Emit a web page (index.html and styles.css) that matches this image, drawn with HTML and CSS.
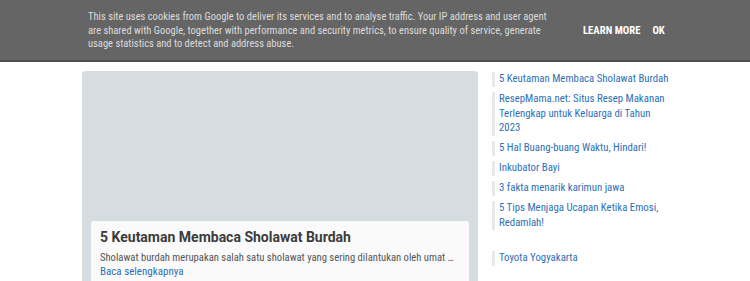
FILE: index.html
```html
<!DOCTYPE html>
<html lang="en">
<head>
    <meta charset="UTF-8">
    <meta name="viewport" content="width=device-width, initial-scale=1.0">
    <title>5 Keutaman Membaca Sholawat Burdah</title>
    <link rel="stylesheet" href="styles.css">
</head>
<body>
    <div class="cookie-bar">
        <p class="cookie-text">This site uses cookies from Google to deliver its services and to analyse traffic. Your IP address and user agent are shared with Google, together with performance and security metrics, to ensure quality of service, generate usage statistics and to detect and address abuse.</p>
        <div class="cookie-actions">
            <a href="#">LEARN MORE</a>
            <a href="#">OK</a>
        </div>
    </div>

    <div class="page">
        <main class="main">
            <article class="featured">
                <div class="featured-box">
                    <h2 class="featured-title">5 Keutaman Membaca Sholawat Burdah</h2>
                    <p class="featured-snippet">Sholawat burdah merupakan salah satu sholawat yang sering dilantukan oleh umat …</p>
                    <a href="#" class="read-more">Baca selengkapnya</a>
                </div>
            </article>
        </main>

        <aside class="sidebar">
            <ul class="link-list">
                <li><a href="#">5 Keutaman Membaca Sholawat Burdah</a></li>
                <li><a href="#">ResepMama.net: Situs Resep Makanan Terlengkap untuk Keluarga di Tahun 2023</a></li>
                <li><a href="#">5 Hal Buang-buang Waktu, Hindari!</a></li>
                <li><a href="#">Inkubator Bayi</a></li>
                <li><a href="#">3 fakta menarik karimun jawa</a></li>
                <li><a href="#">5 Tips Menjaga Ucapan Ketika Emosi, Redamlah!</a></li>
            </ul>
            <ul class="link-list">
                <li><a href="#">Toyota Yogyakarta</a></li>
            </ul>
        </aside>
    </div>
</body>
</html>
```

FILE: styles.css
```css
* {
    margin: 0;
    padding: 0;
    box-sizing: border-box;
}

body {
    font-family: Roboto, "Liberation Sans", sans-serif;
    font-stretch: condensed;
    background-color: #fff;
    overflow: hidden;
}

.cookie-bar {
    position: fixed;
    top: 0;
    left: 0;
    width: 100%;
    height: 62px;
    z-index: 100;
    display: flex;
    align-items: center;
    padding: 1px 88px 0;
    background-color: #656565;
    border-bottom: 2px solid #4e4e4e;
}

.cookie-text {
    width: 462px;
    flex-shrink: 0;
    font-size: 10.5px;
    line-height: 13.7px;
    color: #dcdcdc;
}

.cookie-actions {
    display: flex;
    gap: 12px;
    margin-left: 33px;
    white-space: nowrap;
}

.cookie-actions a {
    color: #fff;
    font-size: 10.7px;
    font-weight: bold;
    text-decoration: none;
}

.page {
    display: flex;
    gap: 14px;
    padding: 71px 0 0 82px;
}

.main {
    width: 396px;
}

.featured {
    height: 230px;
    background-color: #d5dde0;
    border-radius: 3px;
    padding: 150px 9px 0;
}

.featured-box {
    background-color: #fafafa;
    border-radius: 3px;
    padding: 7px 9px;
}

.featured-title {
    font-size: 14px;
    font-stretch: normal;
    font-weight: bold;
    color: #3c3c3c;
    line-height: 18px;
    margin-bottom: 5px;
}

.featured-snippet {
    font-size: 10.6px;
    color: #555;
    line-height: 14px;
    white-space: nowrap;
    overflow: hidden;
    text-overflow: ellipsis;
}

.read-more {
    display: block;
    font-size: 11px;
    line-height: 14px;
    color: #2d70b7;
    text-decoration: none;
}

.sidebar {
    width: 180px;
    padding-top: 1px;
}

.link-list {
    list-style: none;
    display: flex;
    flex-direction: column;
    gap: 5.5px;
    margin-bottom: 21px;
}

.link-list li {
    border-left: 3px solid #e8e8e8;
    padding-left: 4px;
    font-size: 10.8px;
    line-height: 14.5px;
}

.link-list a {
    color: #2d70b7;
    text-decoration: none;
}
```
